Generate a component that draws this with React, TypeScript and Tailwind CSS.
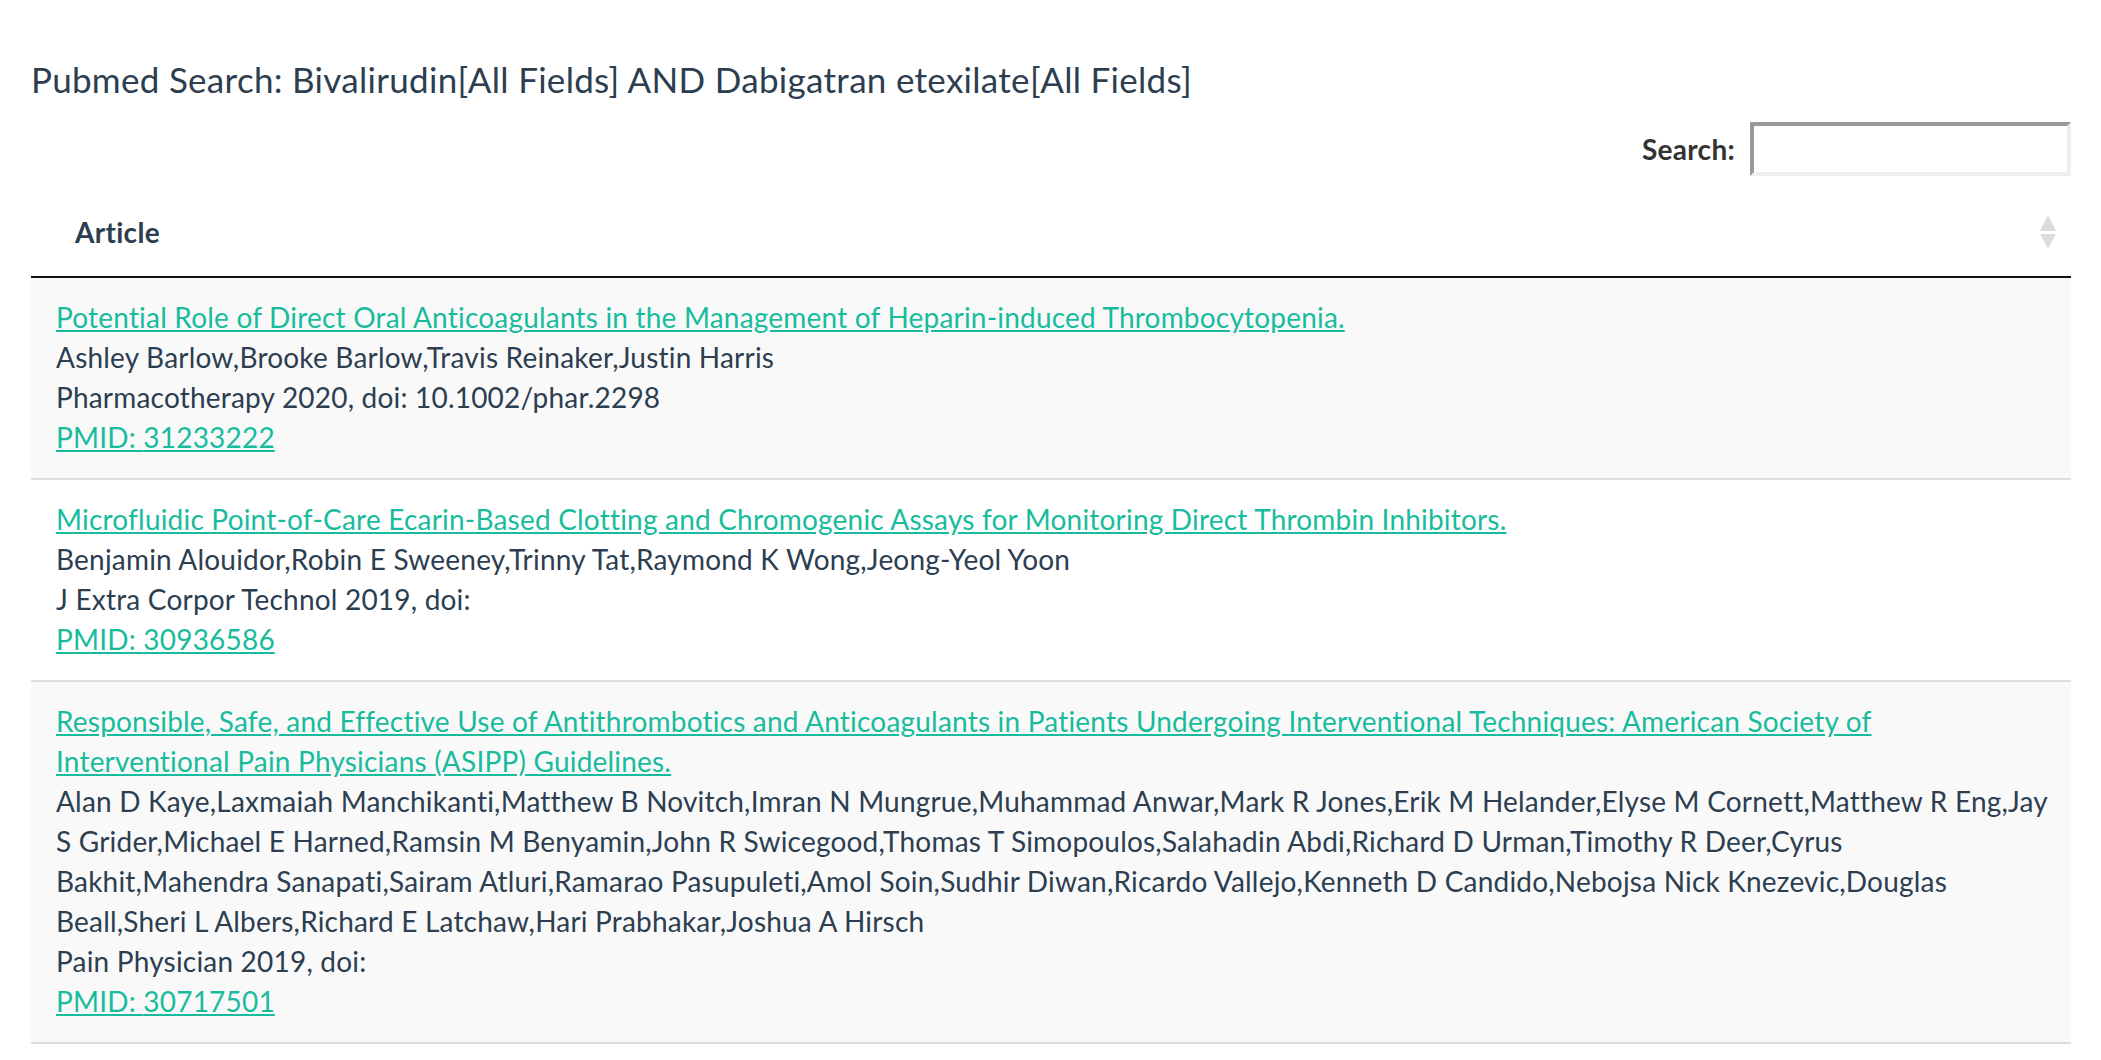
import React from "react";

type Article = {
  title: string;
  authors: string;
  journal: string;
  pmid: string;
};

const articles: Article[] = [
  {
    title: "Potential Role of Direct Oral Anticoagulants in the Management of Heparin-induced Thrombocytopenia.",
    authors: "Ashley Barlow,Brooke Barlow,Travis Reinaker,Justin Harris",
    journal: "Pharmacotherapy 2020, doi: 10.1002/phar.2298",
    pmid: "31233222",
  },
  {
    title: "Microfluidic Point-of-Care Ecarin-Based Clotting and Chromogenic Assays for Monitoring Direct Thrombin Inhibitors.",
    authors: "Benjamin Alouidor,Robin E Sweeney,Trinny Tat,Raymond K Wong,Jeong-Yeol Yoon",
    journal: "J Extra Corpor Technol 2019, doi:",
    pmid: "30936586",
  },
  {
    title:
      "Responsible, Safe, and Effective Use of Antithrombotics and Anticoagulants in Patients Undergoing Interventional Techniques: American Society of Interventional Pain Physicians (ASIPP) Guidelines.",
    authors:
      "Alan D Kaye,Laxmaiah Manchikanti,Matthew B Novitch,Imran N Mungrue,Muhammad Anwar,Mark R Jones,Erik M Helander,Elyse M Cornett,Matthew R Eng,Jay S Grider,Michael E Harned,Ramsin M Benyamin,John R Swicegood,Thomas T Simopoulos,Salahadin Abdi,Richard D Urman,Timothy R Deer,Cyrus Bakhit,Mahendra Sanapati,Sairam Atluri,Ramarao Pasupuleti,Amol Soin,Sudhir Diwan,Ricardo Vallejo,Kenneth D Candido,Nebojsa Nick Knezevic,Douglas Beall,Sheri L Albers,Richard E Latchaw,Hari Prabhakar,Joshua A Hirsch",
    journal: "Pain Physician 2019, doi:",
    pmid: "30717501",
  },
];

function SortBoth() {
  return (
    <svg width="20" height="36" viewBox="0 0 20 36" className="mr-[13px]">
      <path d="M10 1 L18 17 L2 17 Z" fill="#dcdcdc" />
      <path d="M2 20 L18 20 L10 35 Z" fill="#dcdcdc" />
    </svg>
  );
}

export default function App() {
  return (
    <div className="min-h-screen bg-white pl-[31px] pr-[30px] font-[Lato,sans-serif] text-[#2c3e50]">
      <h4 className="pt-[60px] text-[35px] leading-[38px] font-normal tracking-[0.3px]">
        Pubmed Search: Bivalirudin[All Fields] AND Dabigatran etexilate[All Fields]
      </h4>

      <div className="mt-[24px] flex items-center justify-end gap-[15px]">
        <label className="text-[28px] font-bold text-[#333] tracking-[0.3px]">Search:</label>
        <input
          type="search"
          className="h-[54px] w-[321px] border-4 border-t-[#999] border-l-[#999] border-b-[#eee] border-r-[#eee] bg-white outline-none"
        />
      </div>

      <div className="flex items-center justify-between border-b-2 border-[#111] pt-[36px] pb-[24px] pl-[44px]">
        <span className="text-[28px] leading-[40px] font-bold tracking-[0.3px]">Article</span>
        <SortBoth />
      </div>

      <div>
        {articles.map((a, i) => (
          <div
            key={a.pmid}
            className={`pl-[25px] pr-[21px] pt-[19px] pb-[21px] text-[28px] leading-[40px] tracking-[0.2px] ${
              i > 0 ? "border-t-2 border-[#ddd]" : ""
            } ${i % 2 === 0 ? "bg-[#f9f9f9]" : "bg-white"}`}
          >
            <a href="#" className="text-[#18bc9c] underline">
              {a.title}
            </a>
            <br />
            {a.authors}
            <br />
            {a.journal}
            <br />
            <a href="#" className="text-[#18bc9c] underline">
              PMID: {a.pmid}
            </a>
          </div>
        ))}
        <div className="border-t-2 border-[#ddd]" />
      </div>
    </div>
  );
}
